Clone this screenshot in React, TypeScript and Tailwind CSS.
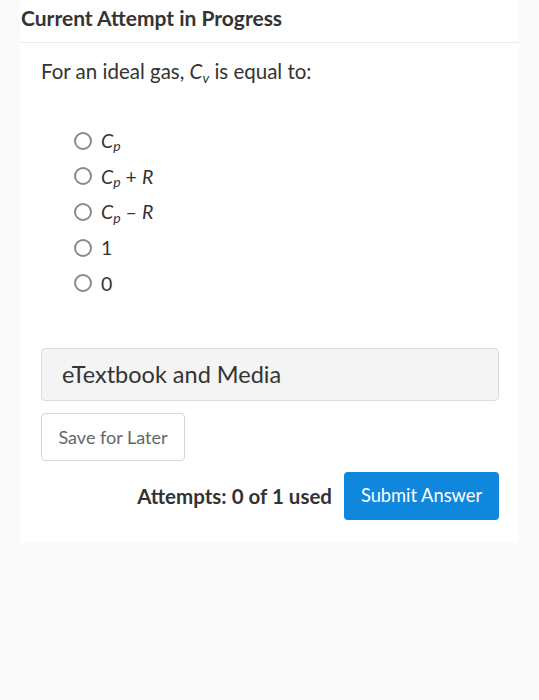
import React from 'react';

const options: React.ReactNode[] = [
  <span key="a"><i>C</i><sub className="italic text-[14px]">p</sub></span>,
  <span key="b"><i>C</i><sub className="italic text-[14px]">p</sub> + <i>R</i></span>,
  <span key="c"><i>C</i><sub className="italic text-[14px]">p</sub> – <i>R</i></span>,
  <span key="d">1</span>,
  <span key="e">0</span>,
];

const App: React.FC = () => {
  return (
    <div className="min-h-[700px] bg-[#fafafa] font-['Lato','Liberation_Sans',sans-serif] text-[#2d3b45]">
      <div className="ml-[20px] w-[499px] bg-white pb-[23px]">
        <div className="h-[43px] border-b border-[#ececec] pl-[1px] pt-[2px] text-[21px] font-bold text-[#333]">
          Current Attempt in Progress
        </div>
        <div className="pl-[21px] pr-[20px]">
          <p className="mt-[13px] text-[20.5px] text-[#333]">
            For an ideal gas, <i>C</i><sub className="italic text-[14px]">v</sub> is equal to:
          </p>
          <ul className="mt-[36px] ml-[33px] flex flex-col">
            {options.map((opt, i) => (
              <li key={i} className="flex h-[35.7px] items-center gap-[9px] text-[19.5px] text-[#333]">
                <span className="h-[18px] w-[18px] rounded-full border-2 border-[#8a8a8a]" />
                {opt}
              </li>
            ))}
          </ul>
          <div className="mt-[47px] flex h-[53px] items-center rounded border border-[#dcdcdc] bg-[#f4f4f4] pl-[20px] text-[23.5px] text-[#333]">
            eTextbook and Media
          </div>
          <button className="mt-[12px] h-[48px] w-[144px] rounded border border-[#d6d6d6] bg-white text-[18px] text-[#666]">
            Save for Later
          </button>
          <div className="mt-[11px] flex items-center justify-end gap-[12px]">
            <span className="text-[20.5px] font-bold text-[#333]">Attempts: 0 of 1 used</span>
            <button className="h-[48px] w-[155px] rounded bg-[#0f87dd] text-[18.3px] text-white">
              Submit Answer
            </button>
          </div>
        </div>
      </div>
    </div>
  );
};

export default App;
